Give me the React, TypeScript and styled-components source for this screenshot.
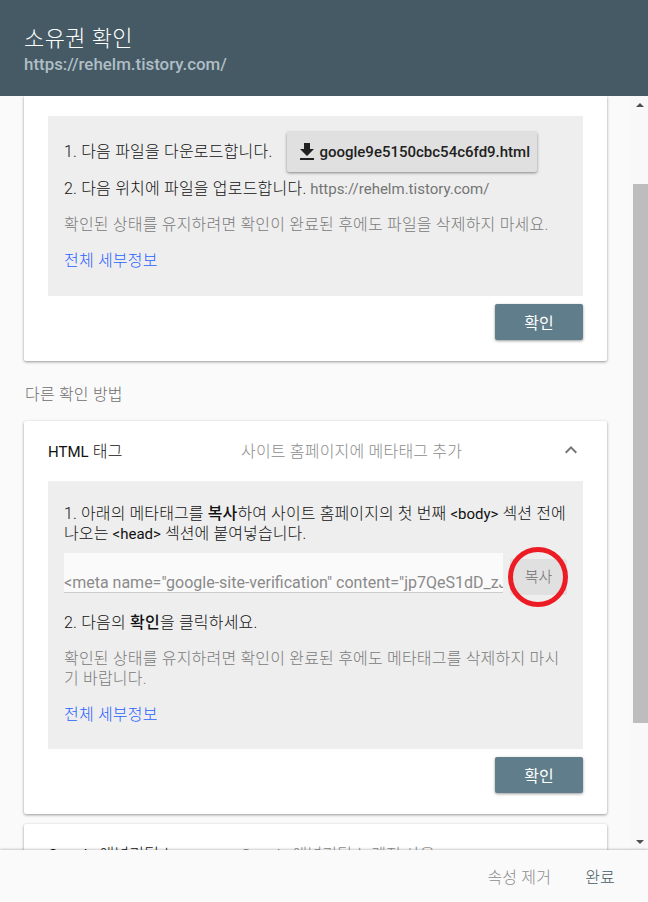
import styled, { createGlobalStyle } from "styled-components";

const GlobalStyle = createGlobalStyle`
  html, body {
    margin: 0;
    padding: 0;
    background: #fafafa;
  }
  body {
    font-family: Roboto, "Noto Sans CJK KR", sans-serif;
    font-size: 16px;
    letter-spacing: 0.2px;
    font-weight: 300;
    color: #212121;
  }
`;

// #region Style

const Dialog = styled.div`
  display: flex;
  flex-direction: column;
  width: 648px;
  height: 902px;
  overflow: hidden;
`;

const Header = styled.header`
  flex: 0 0 96px;
  box-sizing: border-box;
  height: 96px;
  padding: 25px 24px 0;
  background: #455a64;
`;

const Title = styled.div`
  font-size: 22px;
  letter-spacing: 0.4px;
  line-height: 27px;
  color: #fff;
`;

const SiteUrl = styled.div`
  font-size: 16.9px;
  line-height: 24px;
  font-weight: 500;
  letter-spacing: 0;
  color: #b0bec5;
`;

const Body = styled.div`
  flex: 1;
  min-height: 0;
  display: flex;
`;

const Content = styled.main`
  flex: 1;
  min-width: 0;
  padding: 0 24px;
  overflow: hidden;
`;

const Card = styled.section<{ $flushTop?: boolean }>`
  background: #fff;
  border-radius: ${(p) => (p.$flushTop ? "0 0 2px 2px" : "2px")};
  box-shadow: 0 1px 3px rgba(0, 0, 0, 0.4);
  padding: ${(p) => (p.$flushTop ? "20px" : "0")} 24px 21px;
  margin-bottom: 10px;
`;

const SectionLabel = styled.div`
  height: 60px;
  margin-top: -10px;
  padding-left: 1px;
  line-height: 68px;
  color: #6e6e6e;
`;

const CardHeader = styled.div`
  display: grid;
  grid-template-columns: 193px 1fr 24px;
  align-items: center;
  box-sizing: border-box;
  height: 60px;
  padding-bottom: 2px;
`;

const CardName = styled.div`
  margin-top: -1px;
  color: #111;
`;

const CardSummary = styled.div`
  margin-top: -1px;
  color: #8c8c8c;
`;

const Chevron = styled.svg`
  display: block;
  width: 24px;
  height: 24px;
  fill: #757575;
`;

const Panel = styled.div<{ $height: number }>`
  box-sizing: border-box;
  height: ${(p) => p.$height}px;
  padding: 16px 16px 0;
  background: #eee;
  line-height: 20px;
`;

const DownloadRow = styled.div`
  display: flex;
  align-items: center;
  gap: 15px;
  height: 40px;
  color: #111;
`;

const DownloadButton = styled.button`
  display: flex;
  align-items: center;
  box-sizing: border-box;
  height: 40px;
  padding: 0 7px 0 8px;
  border: 0;
  border-radius: 2px;
  background: #e0e0e0;
  box-shadow: 0 1px 3px rgba(0, 0, 0, 0.45);
  color: #212121;
  font: 500 15px Roboto, sans-serif;
`;

const DownloadIcon = styled.svg`
  width: 24px;
  height: 24px;
  fill: #212121;
`;

const Step = styled.p<{ $top: number; $tight?: boolean }>`
  margin: ${(p) => p.$top}px 0 0;
  color: #111;
  letter-spacing: ${(p) => (p.$tight ? "0.12px" : "0.2px")};
`;

const Strong = styled.strong`
  font-weight: 500;
`;

const Latin = styled.span<{ $muted?: boolean }>`
  font-size: 15px;
  font-weight: 400;
  letter-spacing: 0;
  color: ${(p) => (p.$muted ? "#757575" : "inherit")};
`;

const Note = styled.p<{ $top: number }>`
  margin: ${(p) => p.$top}px 0 0;
  color: #7a7a7a;
`;

const DetailsLink = styled.a`
  display: block;
  margin-top: 16px;
  color: #2962ff;
  text-decoration: none;
`;

const CopyRow = styled.div`
  display: flex;
  align-items: flex-start;
  margin-top: 9px;
`;

const MetaInput = styled.div`
  box-sizing: border-box;
  flex: 0 0 439px;
  height: 40px;
  padding-top: 20px;
  overflow: hidden;
  background: #fafafa;
  border-bottom: 1px solid #ccc;
  color: #8a8a8a;
  font-size: 16px;
  font-weight: 400;
  letter-spacing: 0;
  line-height: 20px;
  white-space: nowrap;
`;

const CopyButton = styled.button`
  position: relative;
  box-sizing: border-box;
  flex: 0 0 57px;
  height: 36px;
  margin: 6px 0 0 7px;
  padding: 0 0 4px;
  border: 0;
  border-radius: 2px;
  background: #e0e0e0;
  color: #707070;
  font: 300 15px Roboto, "Noto Sans CJK KR", sans-serif;
`;

const RedCircle = styled.svg`
  position: absolute;
  left: -2px;
  top: -12px;
  width: 60px;
  height: 60px;
  fill: none;
  stroke: #ed1c24;
  stroke-width: 5px;
`;

const ActionRow = styled.div`
  display: flex;
  justify-content: flex-end;
  margin-top: 8px;
`;

const ConfirmButton = styled.button`
  width: 88px;
  height: 36px;
  border: 0;
  border-radius: 2px;
  background: #607d8b;
  box-shadow: 0 1px 3px rgba(0, 0, 0, 0.4);
  color: #fff;
  font: 400 16px Roboto, "Noto Sans CJK KR", sans-serif;
`;

const ScrollTrack = styled.div`
  flex: 0 0 17px;
  display: flex;
  flex-direction: column;
  align-items: stretch;
  background: #f8f8f8;
`;

const ScrollArrow = styled.div<{ $down?: boolean }>`
  flex: 0 0 17px;
  display: flex;
  align-items: center;
  justify-content: center;

  &::before {
    content: "";
    border-left: 4px solid transparent;
    border-right: 4px solid transparent;
    ${(p) => (p.$down ? "border-top" : "border-bottom")}: 4px solid #505050;
  }
`;

const ScrollGap = styled.div<{ $height: number }>`
  flex: 0 0 ${(p) => p.$height}px;
`;

const ScrollThumb = styled.div`
  flex: 0 0 539px;
  margin-left: 2px;
  background: #bdbdbd;
`;

const Footer = styled.footer`
  position: relative;
  flex: 0 0 52px;
  display: flex;
  align-items: center;
  justify-content: flex-end;
  gap: 34px;
  box-sizing: border-box;
  padding: 0 33px 0 0;
  background: #fafafa;
  box-shadow: 0 -1px 2px rgba(0, 0, 0, 0.2);
`;

const FooterAction = styled.span<{ $primary?: boolean }>`
  color: ${(p) => (p.$primary ? "#455a64" : "#8e8e8e")};
`;

// #endregion

function Details() {
  return <DetailsLink href="#">전체 세부정보</DetailsLink>;
}

function Confirm() {
  return (
    <ActionRow>
      <ConfirmButton>확인</ConfirmButton>
    </ActionRow>
  );
}

export default function App() {
  return (
    <>
      <GlobalStyle />
      <Dialog>
        <Header>
          <Title>소유권 확인</Title>
          <SiteUrl>https://rehelm.tistory.com/</SiteUrl>
        </Header>
        <Body>
          <Content>
            <Card $flushTop>
              <Panel $height={180}>
                <DownloadRow>
                  <span>1. 다음 파일을 다운로드합니다.</span>
                  <DownloadButton>
                    <DownloadIcon viewBox="0 0 24 24">
                      <path d="M19 9h-4V3H9v6H5l7 7 7-7zM5 18v2h14v-2H5z" />
                    </DownloadIcon>
                    google9e5150cbc54c6fd9.html
                  </DownloadButton>
                </DownloadRow>
                <Step $top={7}>
                  2. 다음 위치에 파일을 업로드합니다.
                  <Latin $muted> https://rehelm.tistory.com/</Latin>
                </Step>
                <Note $top={16}>
                  확인된 상태를 유지하려면 확인이 완료된 후에도 파일을 삭제하지 마세요.
                </Note>
                <Details />
              </Panel>
              <Confirm />
            </Card>

            <SectionLabel>다른 확인 방법</SectionLabel>

            <Card>
              <CardHeader>
                <CardName>
                  <Latin>HTML</Latin> 태그
                </CardName>
                <CardSummary>사이트 홈페이지에 메타태그 추가</CardSummary>
                <Chevron viewBox="0 0 24 24">
                  <path d="M7.41 15.41L12 10.83l4.59 4.58L18 14l-6-6-6 6z" />
                </Chevron>
              </CardHeader>
              <Panel $height={268}>
                <Step $top={7} $tight>
                  1. 아래의 메타태그를 <Strong>복사</Strong>하여 사이트 홈페이지의 첫 번째{" "}
                  <Latin>&lt;body&gt;</Latin> 섹션 전에 나오는 <Latin>&lt;head&gt;</Latin> 섹션에
                  붙여넣습니다.
                </Step>
                <CopyRow>
                  <MetaInput>
                    &lt;meta name="google-site-verification" content="jp7QeS1dD_zJ
                  </MetaInput>
                  <CopyButton>
                    복사
                    <RedCircle viewBox="0 0 60 60">
                      <circle cx="30" cy="30" r="27.5" />
                    </RedCircle>
                  </CopyButton>
                </CopyRow>
                <Step $top={18}>
                  2. 다음의 <Strong>확인</Strong>을 클릭하세요.
                </Step>
                <Note $top={16}>
                  확인된 상태를 유지하려면 확인이 완료된 후에도 메타태그를 삭제하지 마시기
                  바랍니다.
                </Note>
                <Details />
              </Panel>
              <Confirm />
            </Card>

            <Card>
              <CardHeader>
                <CardName>
                  <Latin>Google</Latin> 애널리틱스
                </CardName>
                <CardSummary>
                  <Latin>Google</Latin> 애널리틱스 계정 사용
                </CardSummary>
              </CardHeader>
            </Card>
          </Content>
          <ScrollTrack>
            <ScrollArrow />
            <ScrollGap $height={71} />
            <ScrollThumb />
            <ScrollGap $height={110} />
            <ScrollArrow $down />
          </ScrollTrack>
        </Body>
        <Footer>
          <FooterAction>속성 제거</FooterAction>
          <FooterAction $primary>완료</FooterAction>
        </Footer>
      </Dialog>
    </>
  );
}
